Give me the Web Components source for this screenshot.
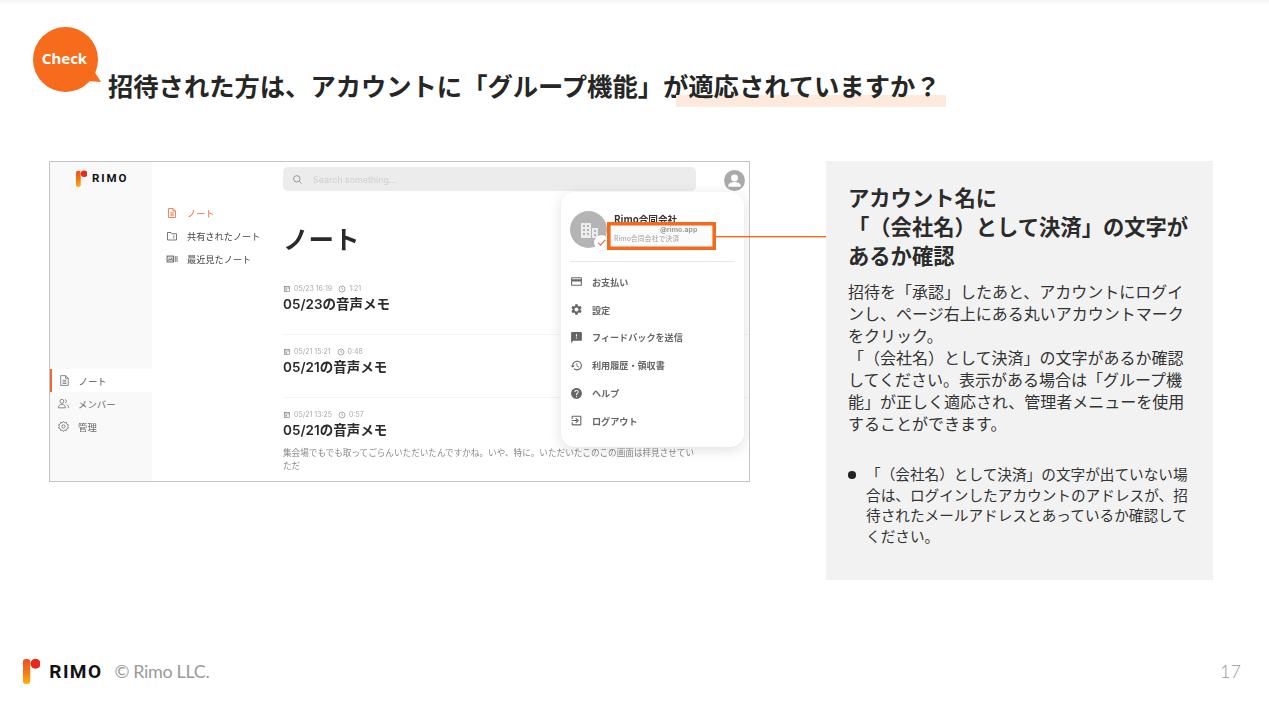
<!DOCTYPE html>
<html lang="ja"><head><meta charset="utf-8"><title>RIMO</title>
<style>
html,body{margin:0;padding:0;background:#fff}
body{font-family:"Noto Sans CJK JP","Noto Sans",sans-serif;text-spacing-trim:space-all}
</style></head><body>
<slide-page>
  <slide-header slot="header" title-a="招待された方は、アカウントに「グループ機能」が" title-b="適応されていますか？"></slide-header>
  <app-shot slot="shot"></app-shot>
  <info-panel slot="panel"></info-panel>
  <slide-footer slot="footer" page="17"></slide-footer>
</slide-page>
<script>
const P={
 card:'M20 4H4c-1.11 0-1.99.89-1.99 2L2 18c0 1.11.89 2 2 2h16c1.11 0 2-.89 2-2V6c0-1.11-.89-2-2-2zm0 14H4v-6h16v6zm0-10H4V6h16v2z',
 gear:'M19.14 12.94c.04-.3.06-.61.06-.94 0-.32-.02-.64-.07-.94l2.03-1.58c.18-.14.23-.41.12-.61l-1.92-3.32c-.12-.22-.37-.29-.59-.22l-2.39.96c-.5-.38-1.03-.7-1.62-.94l-.36-2.54c-.04-.24-.24-.41-.48-.41h-3.84c-.24 0-.43.17-.47.41l-.36 2.54c-.59.24-1.13.57-1.62.94l-2.39-.96c-.22-.08-.47 0-.59.22L2.74 8.87c-.12.21-.08.47.12.61l2.03 1.58c-.05.3-.09.63-.09.94s.02.64.07.94l-2.03 1.58c-.18.14-.23.41-.12.61l1.92 3.32c.12.22.37.29.59.22l2.39-.96c.5.38 1.03.7 1.62.94l.36 2.54c.05.24.24.41.48.41h3.84c.24 0 .44-.17.47-.41l.36-2.54c.59-.24 1.13-.56 1.62-.94l2.39.96c.22.08.47 0 .59-.22l1.92-3.32c.12-.22.07-.47-.12-.61l-2.01-1.58zM12 15.6c-1.98 0-3.6-1.62-3.6-3.6s1.62-3.6 3.6-3.6 3.6 1.62 3.6 3.6-1.62 3.6-3.6 3.6z',
 feedback:'M20 2H4c-1.1 0-1.99.9-1.99 2L2 22l4-4h14c1.1 0 2-.9 2-2V4c0-1.1-.9-2-2-2zm-7 12h-2v-2h2v2zm0-4h-2V6h2v4z',
 history:'M13 3c-4.97 0-9 4.03-9 9H1l3.89 3.89.07.14L9 12H6c0-3.87 3.13-7 7-7s7 3.13 7 7-3.13 7-7 7c-1.93 0-3.68-.79-4.94-2.06l-1.42 1.42C8.27 19.99 10.51 21 13 21c4.97 0 9-4.03 9-9s-4.03-9-9-9zm-1 5v5l4.28 2.54.72-1.21-3.5-2.08V8H12z',
 help:'M12 2C6.48 2 2 6.48 2 12s4.48 10 10 10 10-4.48 10-10S17.52 2 12 2zm1 17h-2v-2h2v2zm2.07-7.75l-.9.92C13.45 12.9 13 13.5 13 15h-2v-.5c0-1.1.45-2.1 1.17-2.83l1.24-1.26c.37-.36.59-.86.59-1.41 0-1.1-.9-2-2-2s-2 .9-2 2H8c0-2.21 1.79-4 4-4s4 1.79 4 4c0 .88-.36 1.68-.93 2.25z',
 exit:'M10.09 15.59L11.5 17l5-5-5-5-1.41 1.41L12.67 11H3v2h9.67l-2.58 2.59zM19 3H5c-1.11 0-2 .9-2 2v4h2V5h14v14H5v-4H3v4c0 1.1.89 2 2 2h14c1.1 0 2-.9 2-2V5c0-1.1-.9-2-2-2z'
};
const ico=(d,s,c)=>`<svg width="${s}" height="${s}" viewBox="0 0 24 24" fill="${c}"><path d="${d}"/></svg>`;
const strokeIco={
 doc:'<path d="M5 3h9l5 5v13H5z" stroke-linejoin="round"/><path d="M14 3v5h5M8.5 11.5h7M8.5 14.5h7M8.5 17.5h7"/>',
 folder:'<path d="M3 5h7l2 2.5h9V20H3z"/><path d="M14 12h3M14 15.5h3"/>',
 recent:'<rect x="2" y="6" width="13" height="12" fill="currentColor" fill-opacity=".25"/><path d="M5 15l2-3 2 2 2-3 2 4M18.5 6v12M22 6v12"/>',
 people:'<circle cx="9" cy="8" r="3.6"/><path d="M2.5 20c0-4 3-6.5 6.5-6.5s6.5 2.5 6.5 6.5z"/><path d="M15 4.6a3.6 3.6 0 0 1 0 6.8M18 14c2 .8 3.5 3 3.5 6"/>',
 gear:'<circle cx="12" cy="12" r="3"/><path d="M12 2.5l2 2.6 3.2-.6.9 3.1 3 1.3-1.3 3 1.3 3-3 1.3-.9 3.1-3.2-.6-2 2.6-2-2.6-3.2.6-.9-3.1-3-1.3 1.3-3-1.3-3 3-1.3.9-3.1 3.2.6z" stroke-linejoin="round"/>',
 search:'<circle cx="10.5" cy="10.5" r="7"/><path d="M16 16l5 5"/>',
 cal:'<rect x="4" y="5" width="16" height="15"/><path d="M4 9h16M8 3v3M16 3v3M8 13h3v3H8z"/>',
 clock:'<circle cx="12" cy="12" r="9"/><path d="M12 7v5l3.5 2"/>'
};
const sIco=(k,s,c,w=1.6)=>`<svg width="${s}" height="${s}" viewBox="0 0 24 24" fill="none" stroke="${c}" color="${c}" stroke-width="${w}">${strokeIco[k]}</svg>`;
function def(name,css,html){
 customElements.define(name,class extends HTMLElement{
  connectedCallback(){ if(this.shadowRoot)return;
   const r=this.attachShadow({mode:'open'});
   r.innerHTML=`<style>${css}</style>`+(typeof html==='function'?html(this):html);
  }
 });
}
const CJK='"Noto Sans CJK JP","Noto Sans",sans-serif';
const UI='Inter,"Noto Sans CJK JP",sans-serif';

def('slide-page',`
:host{display:flex;flex-direction:column;width:1269px;height:711px;position:relative;overflow:hidden;background:#fff;font-family:${CJK}}
.top{height:4px;background:linear-gradient(#f3f3f3,#fff);flex:none}
.main{display:flex;align-items:flex-start;gap:76px;padding-left:49px;margin-top:157px;position:relative}
.foot{margin-top:auto}
.line{position:absolute;left:716px;top:75px;width:110px;height:2px;background:linear-gradient(#f4691a 50%,rgba(244,105,26,.4) 50%);z-index:5}
`,`<div class="top"></div><slot name="header"></slot>
<div class="main"><slot name="shot"></slot><slot name="panel"></slot><div class="line"></div></div>
<div class="foot"><slot name="footer"></slot></div>`);

def('check-bubble',`
:host{display:block;width:70px;height:66px;position:relative}
.c{width:65px;height:65px;border-radius:50%;background:#f76b1c;color:#fff;display:flex;align-items:center;justify-content:center;font:700 15px "Noto Sans",sans-serif;padding:0 2px 4px 0;box-sizing:border-box}
svg{position:absolute;left:55px;top:44px}
`,`<div class="c">Check</div><svg width="14" height="12" viewBox="0 0 14 12"><path d="M6 0L13 11 0 10z" fill="#f76b1c"/></svg>`);

def('slide-header',`
:host{display:block;height:0;position:relative}
.b{position:absolute;left:33px;top:23px}
h1{position:absolute;left:108px;top:63px;margin:0;font:700 25.3px/36px ${CJK};color:#262626;white-space:nowrap;z-index:1}
mark{background:none;color:inherit;position:relative;z-index:0}
mark::before{content:"";position:absolute;left:-12px;right:-5px;top:28px;height:12px;background:#fdeadd;z-index:-1}
`,h=>`<div class="b"><check-bubble></check-bubble></div><h1>${h.getAttribute('title-a')}<mark>${h.getAttribute('title-b')}</mark></h1>`);

def('rimo-logo',`
:host{display:inline-flex;align-items:center;gap:var(--gap,4px)}
svg{display:block}
span{font:700 var(--fs,12px)/1 Roboto,sans-serif;letter-spacing:var(--ls,1.6px);color:#111}
`,`<svg viewBox="0 0 18 27" style="height:var(--h,17px);width:calc(var(--h,17px)*.667)"><defs><linearGradient id="g" x1="0" y1="0" x2="0" y2="1"><stop offset="0" stop-color="#ef4e22"/><stop offset=".55" stop-color="#f47a12"/><stop offset="1" stop-color="#fdb40a"/></linearGradient></defs><rect x="0" y="1" width="7.5" height="26" rx="3" fill="url(#g)"/><circle cx="13" cy="6" r="5.2" fill="#e8291c"/></svg><span>RIMO</span>`);

def('side-item',`
:host{display:flex;align-items:center;height:23px;padding-left:7px;gap:8px;font-size:9.4px;color:#666;box-sizing:border-box}
:host([active]){background:#fff;border-left:2px solid #ee6a33;padding-left:5.5px;color:#555}
`,h=>sIco(h.getAttribute('icon'),13,'#666',1.4)+`<span><slot></slot></span>`);

def('sub-item',`
:host{display:flex;align-items:center;height:23px;gap:9px;font-size:9.2px;color:#444;white-space:nowrap}
:host([active]){color:#e8693a}
svg{flex:none}
`,h=>sIco(h.getAttribute('icon'),12,h.hasAttribute('active')?'#e8693a':'#555',1.6)+`<span><slot></slot></span>`);

def('note-row',`
:host{display:block;height:63px;box-sizing:border-box;padding-top:12px;border-bottom:1px solid #f3f3f3;margin:0}
:host(:last-of-type){border-bottom:0}
.m{display:flex;align-items:center;gap:3px;font:7px/10px ${UI};color:#aaa;margin-bottom:1px}
.m svg{flex:none}
.m .c{margin-left:3px;display:flex}
.t{font:600 13.5px/18px ${UI};color:#2b2b2b}
.s{font-size:8.6px;line-height:13px;color:#8a8a8a;margin-top:7px;width:414px}
`,h=>`<div class="m">${sIco('cal',8,'#777',1.8)}<span>${h.getAttribute('date')}</span><span class="c">${sIco('clock',8,'#777',1.8)}</span><span>${h.getAttribute('dur')}</span></div><div class="t">${h.getAttribute('name')}</div>${h.hasAttribute('snip')?`<div class="s">${h.getAttribute('snip')}</div>`:''}`);

def('menu-item',`
:host{display:flex;align-items:center;gap:9px;height:27.8px;padding-left:9px;font-size:9.1px;font-weight:700;color:#666;white-space:nowrap}
`,h=>ico(P[h.getAttribute('icon')],13,'#666')+`<span><slot></slot></span>`);

def('account-menu',`
:host{display:block;position:absolute;left:511px;top:30px;width:183px;height:255px;background:#fff;border-radius:14px;box-shadow:0 3px 14px rgba(0,0,0,.13);box-sizing:border-box;padding:19px 0 0 0;z-index:2}
.blur{filter:blur(.35px)}
.head{display:flex;height:50px;padding-left:9px;gap:7px}
.av{width:37px;height:37px;border-radius:50%;background:#b4b4b4;display:flex;align-items:center;justify-content:center;flex:none;position:relative}
.name{font-size:9.6px;font-weight:700;color:#333;line-height:12px;margin-top:2px}
.chk{position:absolute;left:24px;top:24px;width:15px;height:15px;border-radius:50%;background:#fff;display:flex;align-items:center;justify-content:center;box-shadow:0 0 2px rgba(0,0,0,.15)}
hr{margin:0 9px 6px;border:0;border-top:1px solid #e8e8e8}
.box{position:absolute;left:46px;top:30px;width:109px;height:28px;box-shadow:inset 0 0 0 3.6px #f4691a;background:#fbfbfb;z-index:3;font-size:7px;color:#999}
.mail{position:absolute;left:53px;top:4px;font:700 6.9px/8px ${UI};color:#9a9a9a;white-space:nowrap;filter:blur(.3px)}
.bill{position:absolute;left:7px;top:12px;white-space:nowrap;font-size:6.9px;line-height:8px;color:#a0a0a0;filter:blur(.3px)}
`,`<div class="blur"><div class="head"><div class="av"><svg width="20" height="20" viewBox="0 0 20 20" fill="#fff" opacity=".75"><path d="M2 3h10v15H2zM13 8h6v10h-6z"/><g fill="#b4b4b4"><rect x="4" y="5" width="2" height="2"/><rect x="8" y="5" width="2" height="2"/><rect x="4" y="9" width="2" height="2"/><rect x="8" y="9" width="2" height="2"/><rect x="4" y="13" width="2" height="2"/><rect x="8" y="13" width="2" height="2"/><rect x="15" y="10" width="2" height="2"/><rect x="15" y="14" width="2" height="2"/></g></svg>
<div class="chk"><svg width="9" height="9" viewBox="0 0 10 10" fill="none" stroke="#e8693a" stroke-width="1.2"><path d="M1.5 5.5L4 8l5-6"/></svg></div></div><div class="name">Rimo合同会社</div></div>
<hr><slot></slot></div>
<div class="box"><span class="mail">@rimo.app</span><span class="bill">Rimo合同会社で決済</span></div>`);

def('app-shot',`
:host{display:block;width:701px;height:321px;box-sizing:border-box;border:1px solid #c4c4c4;position:relative;overflow:hidden;background:#fff;flex:none}
.wrap{display:flex;height:100%;filter:blur(.35px)}
.side{width:102px;background:#f9f9f9;display:flex;flex-direction:column;flex:none}
.logo{display:flex;justify-content:center;padding:8px 0 0 2px;--h:17px;--fs:11.5px;--ls:1.9px;--gap:5px}
.nav{margin-top:auto;padding-bottom:43px}
.sub{width:118px;padding:39.5px 0 0 14px;box-sizing:border-box;flex:none}
.main{flex:1;padding:5px 0 0 13px;min-width:0;position:relative}
.search{width:413px;height:24px;background:#ececec;border-radius:5px;display:flex;align-items:center;gap:10px;padding-left:9px;box-sizing:border-box;font:8.9px ${UI};color:#cfcfcf}
.me{position:absolute;left:454px;top:7.5px;line-height:0}
h2{margin:0;font:700 25.5px/36px ${CJK};color:#2a2a2a;margin-top:29px;height:52px}
.pill{position:absolute;left:398px;top:63px;width:60px;height:27px;border-radius:14px;background:#fff;box-shadow:0 1px 5px rgba(0,0,0,.12)}
`,`<div class="wrap"><div class="side"><div class="logo"><rimo-logo></rimo-logo></div>
<div class="nav"><side-item icon="doc" active>ノート</side-item><side-item icon="people">メンバー</side-item><side-item icon="gear">管理</side-item></div></div>
<div class="sub"><sub-item icon="doc" active>ノート</sub-item><sub-item icon="folder">共有されたノート</sub-item><sub-item icon="recent">最近見たノート</sub-item></div>
<div class="main"><div class="search">${sIco('search',11,'#888',1.8)}<span>Search something...</span></div>
<div class="me"><svg width="21" height="21" viewBox="0 0 24 24"><circle cx="12" cy="12" r="12" fill="#aaa"/><circle cx="12" cy="9" r="3.9" fill="#fff"/><path d="M5 17.6c0-2.6 4.5-3.9 7-3.9s7 1.3 7 3.9v1.4H5z" fill="#fff"/></svg></div>
<h2>ノート</h2><div class="pill"></div>
<note-row date="05/23 16:19" dur="1:21" name="05/23の音声メモ"></note-row>
<note-row date="05/21 15:21" dur="0:48" name="05/21の音声メモ"></note-row>
<note-row date="05/21 13:25" dur="0:57" name="05/21の音声メモ" snip="集会場でもでも取ってごらんいただいたんですかね。いや、特に。いただいたこのこの画面は拝見させていただ"></note-row>
</div></div>
<account-menu><menu-item icon="card">お支払い</menu-item><menu-item icon="gear">設定</menu-item><menu-item icon="feedback">フィードバックを送信</menu-item><menu-item icon="history">利用履歴・領収書</menu-item><menu-item icon="help">ヘルプ</menu-item><menu-item icon="exit">ログアウト</menu-item></account-menu>`);

def('info-panel',`
:host{display:block;width:387px;height:419px;background:#f2f2f2;box-sizing:border-box;padding:21px 0 0 22px;color:#333;flex:none}
h3{margin:0;font:700 21.3px/29px ${CJK};color:#2b2b2b;white-space:nowrap}
p{margin:11px 0 0;font:400 16px/22px ${CJK};white-space:nowrap;color:#333}
ul{margin:30px 0 0;padding:0;list-style:none}
li{position:relative;padding-left:18px;font:400 14.65px/20.5px ${CJK};white-space:nowrap;color:#333}
li::before{content:"";position:absolute;left:0;top:7px;width:7.5px;height:7.5px;border-radius:50%;background:#222}
`,`<h3>アカウント名に<br>「（会社名）として決済」の文字が<br>あるか確認</h3>
<p>招待を「承認」したあと、アカウントにログイ<br>ンし、ページ右上にある丸いアカウントマーク<br>をクリック。<br>「（会社名）として決済」の文字があるか確認<br>してください。表示がある場合は「グループ機<br>能」が正しく適応され、管理者メニューを使用<br>することができます。</p>
<ul><li>「（会社名）として決済」の文字が出ていない場<br>合は、ログインしたアカウントのアドレスが、招<br>待されたメールアドレスとあっているか確認して<br>ください。</li></ul>`);

def('slide-footer',`
:host{display:flex;align-items:center;height:26px;padding:0 28px 27px 23px;color:#999}
.l{--h:26px;--fs:19px;--ls:1.4px;--gap:9px}
.c{font:400 18px Lato,sans-serif;color:#9a9a9a;margin-left:12px;letter-spacing:-.35px}
.n{margin-left:auto;font:300 18px Lato,sans-serif;color:#999}
`,h=>`<rimo-logo class="l"></rimo-logo><span class="c">© Rimo LLC.</span><span class="n">${h.getAttribute('page')}</span>`);
</script>
</body></html>
